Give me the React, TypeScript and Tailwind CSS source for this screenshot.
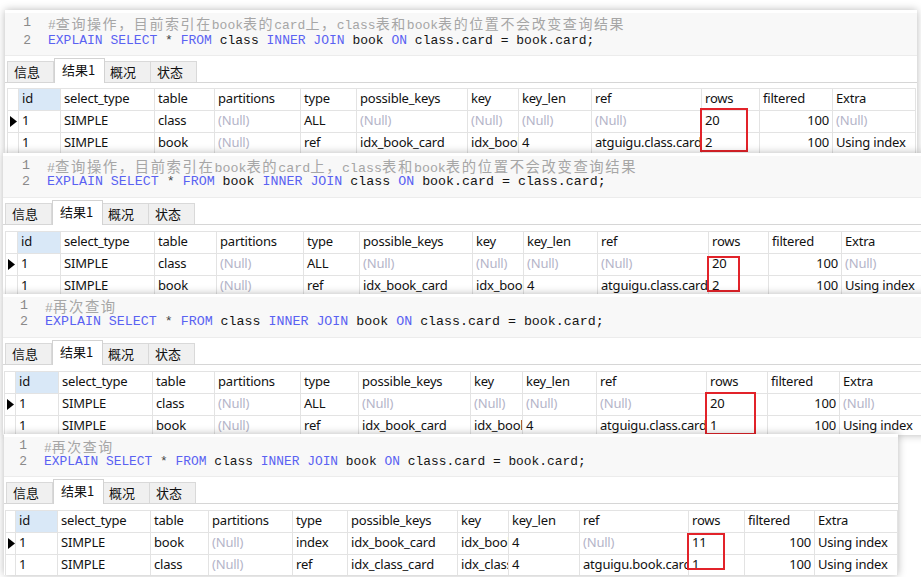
import type { ReactNode } from "react";

type Cell = string | null;

const HEAD = ["id", "select_type", "table", "partitions", "type", "possible_keys", "key", "key_len", "ref", "rows", "filtered", "Extra"];

const COMMENT_A = "#查询操作，目前索引在book表的card上，class表和book表的位置不会改变查询结果";
const COMMENT_B = "#再次查询";

type Panel = {
    comment: string;
    first: string;
    second: string;
    wrap: string;
    code: string;
    line: string;
    num: string;
    font: string;
    grid: string;
    cols: string;
    box: string;
    rows: Cell[][];
};

const rowsClassFirst = (r: string): Cell[][] => [
    ["1", "SIMPLE", "class", null, "ALL", null, null, null, null, "20", "100", null],
    ["1", "SIMPLE", "book", null, "ref", "idx_book_card", "idx_book_card", "4", "atguigu.class.card", r, "100", "Using index"],
];

const PANELS: Panel[] = [
    {
        comment: COMMENT_A,
        first: "class",
        second: "book",
        wrap: "ml-[5px] mt-[10px] w-[912px] h-[143px]",
        code: "pt-[1px] pb-[5px]",
        line: "h-[18px] leading-[18px]",
        num: "w-[43px]",
        font: "text-[13px]",
        grid: "ml-[2px] mt-[5px]",
        cols: "grid-cols-[11px_42px_94px_60px_86px_56px_111px_51px_73px_110px_58px_73px_83px]",
        box: "left-[693px] top-[20px] w-[48px] h-[44px]",
        rows: rowsClassFirst("2"),
    },
    {
        comment: COMMENT_A,
        first: "book",
        second: "class",
        wrap: "ml-[3px] w-[930px] h-[141px]",
        code: "pt-[2px] pb-[7px]",
        line: "h-[16px] leading-[16px]",
        num: "w-[44px]",
        font: "text-[13.3px]",
        grid: "ml-[2px] mt-[6px]",
        cols: "grid-cols-[12px_43px_94px_62px_87px_56px_113px_51px_74px_111px_60px_73px_84px]",
        box: "left-[702px] top-[25px] w-[33px] h-[36px]",
        rows: rowsClassFirst("2"),
    },
    {
        comment: COMMENT_B,
        first: "class",
        second: "book",
        wrap: "ml-[3px] w-[930px] h-[141px]",
        code: "pt-[1px] pb-[7px]",
        line: "h-[16px] leading-[16px]",
        num: "w-[42px]",
        font: "text-[13.3px]",
        grid: "ml-[1px] mt-[6px]",
        cols: "grid-cols-[11px_43px_94px_62px_86px_58px_112px_52px_74px_110px_61px_72px_86px]",
        box: "left-[701px] top-[21px] w-[51px] h-[43px]",
        rows: rowsClassFirst("1"),
    },
    {
        comment: COMMENT_B,
        first: "class",
        second: "book",
        wrap: "ml-[4px] -mt-px w-[894px] h-[141px]",
        code: "pt-[1px] pb-[6px]",
        line: "h-[16px] leading-[16px]",
        num: "w-[40px]",
        font: "text-[12.9px]",
        grid: "ml-[1px] mt-[6px]",
        cols: "grid-cols-[10px_42px_93px_58px_84px_55px_110px_51px_71px_109px_56px_70px_83px]",
        box: "left-[682px] top-[23px] w-[38px] h-[37px]",
        rows: [
            ["1", "SIMPLE", "book", null, "index", "idx_book_card", "idx_book_card", "4", null, "11", "100", "Using index"],
            ["1", "SIMPLE", "class", null, "ref", "idx_class_card", "idx_class_card", "4", "atguigu.book.card", "1", "100", "Using index"],
        ],
    },
];

// CJK runs get double the mono cell width, like the editor draws them
const Comment = ({ text }: { text: string }) => (
    <span className="text-[#a6a6a6]">
        {text.split(/([\u3000-\u9fff\uff00-\uffef]+)/).map((part, i) =>
            /[\u3000-\u9fff\uff00-\uffef]/.test(part) ? (
                <span
                    key={i}
                    className="text-[1.077em] tracking-[0.114em] [font-family:'Noto_Sans_CJK_SC',sans-serif]"
                >
                    {part}
                </span>
            ) : (
                <span key={i}>{part}</span>
            )
        )}
    </span>
);

const K = ({ children }: { children: ReactNode }) => <span className="text-[#5a62f2]">{children}</span>;

const Sql = ({ a, b }: { a: string; b: string }) => (
    <span className="text-[#151515]">
        <K>EXPLAIN</K> <K>SELECT</K> <span className="text-[#444]">*</span> <K>FROM</K> {a} <K>INNER</K>{" "}
        <K>JOIN</K> {b} <K>ON</K> {a}.card = {b}.card;
    </span>
);

const Tabs = () => (
    <div className="flex h-[24px] items-end border-b border-[#d6d6d6] pl-[2px] text-[13px] text-[#111] [font-family:'Noto_Sans_CJK_SC',sans-serif]">
        <div className="h-[21px] w-[47px] border border-b-0 border-[#d9d9d9] bg-[#f0f0f0] pl-[6px] leading-[20px]">信息</div>
        <div className="relative -mb-px h-[25px] w-[51px] border border-b-0 border-[#d2d2d2] bg-white pl-[7px] leading-[21px]">
            结果1
        </div>
        <div className="h-[21px] w-[46px] border border-b-0 border-l-0 border-[#d9d9d9] bg-[#f0f0f0] pl-[5px] leading-[20px]">
            概况
        </div>
        <div className="h-[21px] w-[46px] border border-b-0 border-l-0 border-[#d9d9d9] bg-[#f0f0f0] pl-[6px] leading-[20px]">
            状态
        </div>
    </div>
);

const Arrow = () => (
    <svg width="7" height="11" viewBox="0 0 7 11" className="ml-[2px]">
        <polygon points="0,0 7,5.5 0,11" fill="#000" />
    </svg>
);

const cellBase = "h-[22px] overflow-hidden whitespace-nowrap border-b border-r border-[#e3e3e3] px-[3px] leading-[18px]";

const Grid = ({ p }: { p: Panel }) => (
    <div className={`relative ${p.grid}`}>
        <div
            className={`grid w-max border-l border-t border-[#e3e3e3] text-[13px] tracking-[-0.2px] text-[#111] [font-family:'Noto_Sans',sans-serif] ${p.cols}`}
        >
            <div className={cellBase} />
            {HEAD.map((h, i) => (
                <div key={h} className={`${cellBase} ${i === 0 ? "bg-[#d9e8f7]" : "bg-white"}`}>
                    {h}
                </div>
            ))}
            {p.rows.map((row, r) => [
                <div key={`i${r}`} className={`${cellBase} flex items-center !px-0`}>
                    {r === 0 && <Arrow />}
                </div>,
                ...row.map((c, i) => (
                    <div
                        key={`${r}-${i}`}
                        className={`${cellBase} ${i === 10 ? "text-right" : ""} ${c === null ? "text-[#b4b4c8]" : ""}`}
                    >
                        {c === null ? "(Null)" : c}
                    </div>
                )),
            ])}
        </div>
        <div className={`absolute border-2 border-[#e2232a] ${p.box}`} />
    </div>
);

const EditorPanel = ({ p }: { p: Panel }) => (
    <div className={`relative overflow-hidden bg-white shadow-[0_0_8px_rgba(0,0,0,0.28)] ${p.wrap}`}>
        <div
            className={`mt-[3px] border-b border-[#ececec] bg-[#f8f8f8] whitespace-pre [font-family:'Liberation_Mono',monospace] ${p.code} ${p.font}`}
        >
            <div className={`flex ${p.line}`}>
                <span className={`shrink-0 pr-[17px] text-right text-[#8a8a8a] ${p.num}`}>1</span>
                <Comment text={p.comment} />
            </div>
            <div className={`flex ${p.line}`}>
                <span className={`shrink-0 pr-[17px] text-right text-[#8a8a8a] ${p.num}`}>2</span>
                <Sql a={p.first} b={p.second} />
            </div>
        </div>
        <div className="mt-[3px]">
            <Tabs />
        </div>
        <Grid p={p} />
    </div>
);

export default function App() {
    return (
        <div className="h-[577px] w-[921px] overflow-hidden bg-white">
            <div className="flex flex-col">
                {PANELS.map((p, i) => (
                    <EditorPanel key={i} p={p} />
                ))}
            </div>
        </div>
    );
}
